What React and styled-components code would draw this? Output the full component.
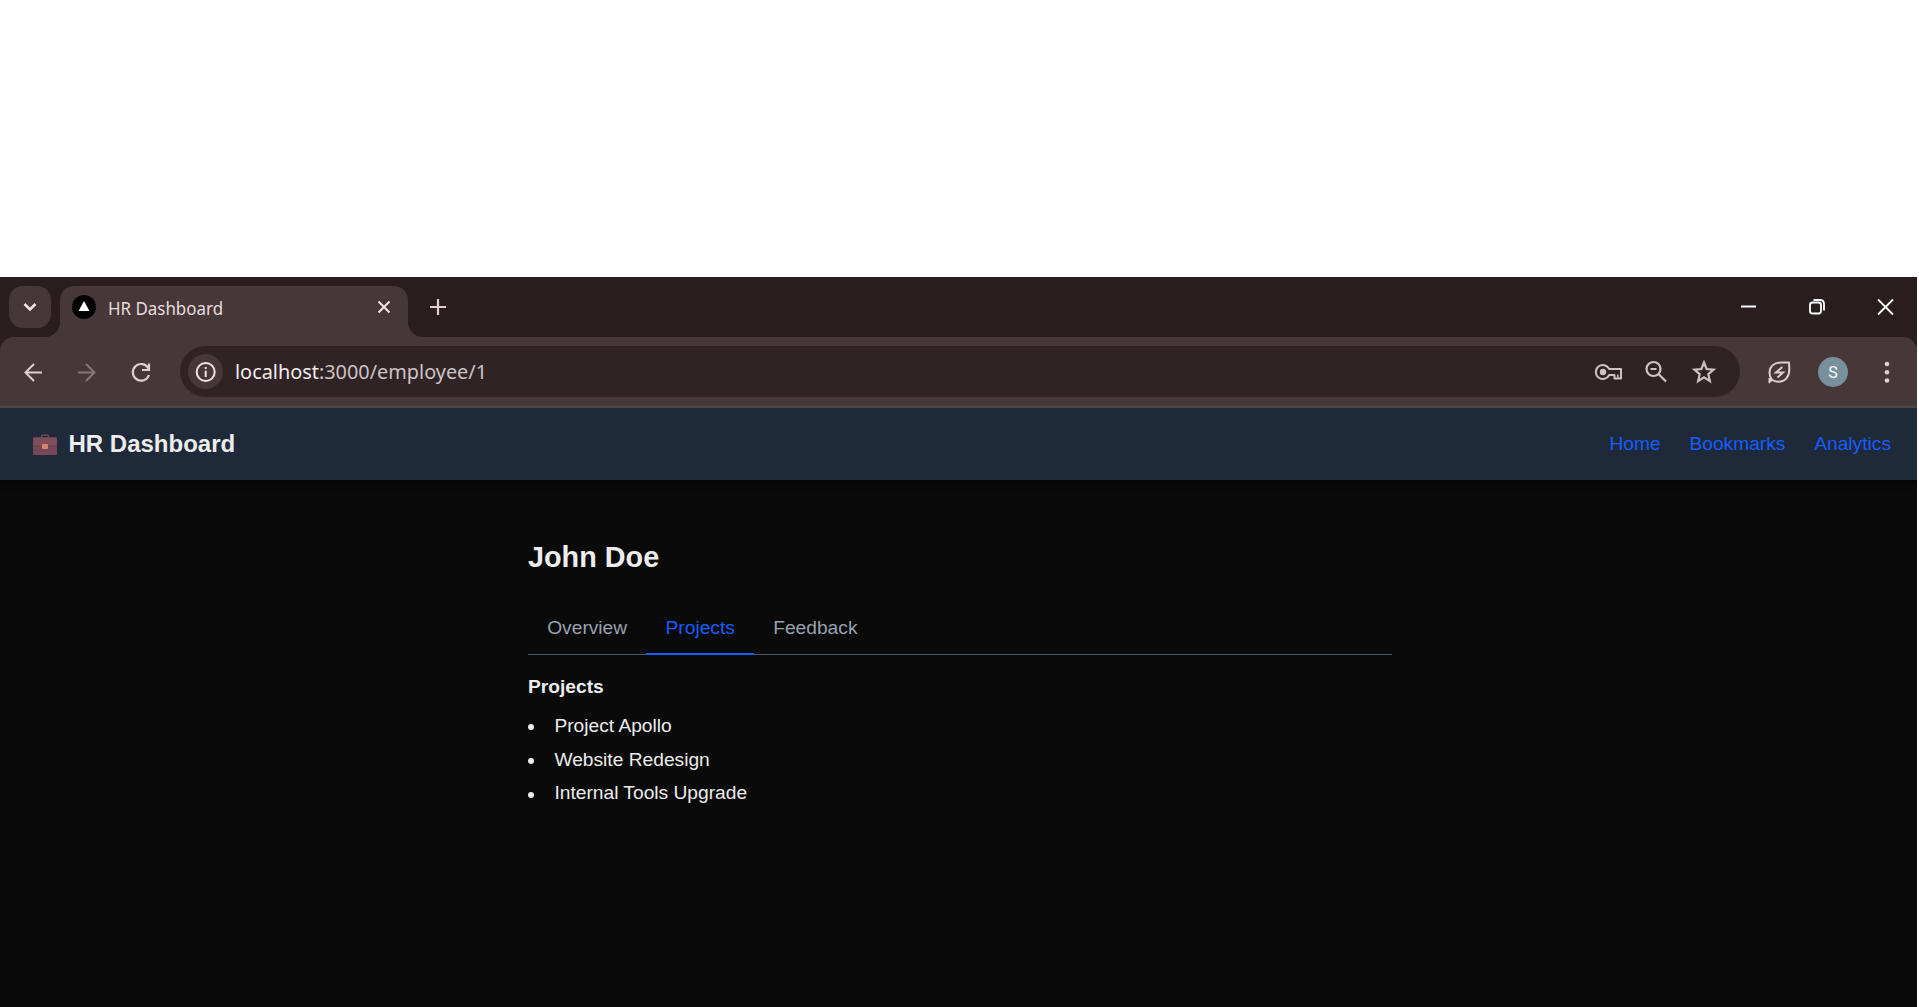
import React from "react";
import styled, { createGlobalStyle } from "styled-components";

const Global = createGlobalStyle`
  * { box-sizing: border-box; }
  body { margin: 0; background: #fff; }
  h1, h2, ul { margin: 0; padding: 0; }
`;
const ui = `"Noto Sans", "Open Sans", sans-serif`;
const Page = styled.div`
  width: 1919px; height: 1007px; padding: 277px 2px 0 0; overflow: hidden; background: #fff;
  display: flex; flex-direction: column; font-family: "Liberation Sans", Arial, sans-serif;
`;
const TabStrip = styled.div`
  height: 60px; flex: none; background: #291d1f; display: flex; align-items: flex-start; padding: 9px 0 0 9px;
`;
const TabSearch = styled.button`
  width: 42px; height: 42px; border: 0; border-radius: 14px; background: #463739; padding: 0;
  display: grid; place-items: center;
`;
const BrowserTab = styled.div`
  position: relative; width: 348px; height: 51px; margin-left: 9px; padding: 0 13px 9px 12px;
  border-radius: 14px 14px 0 0; background: #463739; display: flex; align-items: center;
  &::before, &::after { content: ""; position: absolute; bottom: 0; width: 15px; height: 15px; }
  &::before { left: -15px; background: radial-gradient(circle at 0 0, transparent 14.5px, #463739 15.5px); }
  &::after { right: -15px; background: radial-gradient(circle at 100% 0, transparent 14.5px, #463739 15.5px); }
`;
const TabTitle = styled.span`
  font: 18px/24px ${ui}; color: #e8dcdd; margin: 1px 0 0 12px; flex: 1; white-space: nowrap;
  & > span { display: inline-block; transform-origin: left; transform: scaleX(${p => p.$fit}); }
`;
const WindowButtons = styled.div`
  margin-left: auto; display: flex; align-items: center; height: 42px; gap: 49.5px; padding-right: 22px;
`;
const ToolbarWrap = styled.div` background: #291d1f; flex: none; `;
const Toolbar = styled.div`
  height: 71px; background: #463739; border-radius: 14px 14px 0 0; border-bottom: 2px solid #4b4544;
  display: flex; align-items: center; padding: 0 19px 0 20px;
`;
const NavIcons = styled.div` display: flex; gap: 28px; width: 160px; `;
const Omnibox = styled.div`
  width: 1560px; height: 51px; border-radius: 26px; background: #302325; display: flex; align-items: center;
  padding: 0 23px 0 8px;
`;
const InfoBadge = styled.span`
  width: 35px; height: 35px; border-radius: 50%; background: #463739; display: grid; place-items: center;
`;
const Url = styled.span`
  font: 20px/28px ${ui}; color: #cdc3c4; margin: 1px 0 0 12px; flex: 1; white-space: nowrap;
  & > span { display: inline-block; transform-origin: left; transform: scaleX(${p => p.$fit}); }
  b { font-weight: 400; color: #f4eced; }
`;
const OmniActions = styled.div`
  display: flex; align-items: center; gap: 20px;
  & > :last-child { margin-left: 3px; }
`;
const ToolActions = styled.div`
  display: flex; align-items: center; margin-left: auto; gap: 26px;
  & > :last-child { margin-left: 2px; }
`;
const Avatar = styled.span`
  width: 30px; height: 30px; border-radius: 50%; background: #78909c; color: #fff;
  font: 16px/31px Roboto, sans-serif; text-align: center;
`;
const SiteHeader = styled.header`
  height: 72px; flex: none; background: #1e2939; display: flex; align-items: center; justify-content: space-between;
  padding: 0 26px 0 33px; box-shadow: 0 3px 7px rgba(0, 0, 0, .5); clip-path: inset(0 0 -16px 0); z-index: 1;
`;
const Brand = styled.h1`
  font-size: 24px; line-height: 32px; font-weight: 700; color: #ededed; display: flex; align-items: center; gap: 11.5px;
`;
const SiteNav = styled.nav` display: flex; gap: 28.8px; `;
const NavLink = styled.a` color: #155dfc; font-size: 19.2px; line-height: 28px; `;
const Main = styled.main` flex: 1; background: #0a0a0a; color: #ededed; padding: 58px 0 0 528px; `;
const Profile = styled.section` width: 864px; `;
const Name = styled.h1` font-size: 28.8px; line-height: 38px; `;
const Tabs = styled.div` display: flex; margin-top: 29px; height: 50px; border-bottom: 1px solid #4a5565; `;
const Tab = styled.button`
  height: 50px; border: 0; background: none; padding: 0 19.2px 2px; font: 19.2px/28px "Liberation Sans", Arial, sans-serif;
  color: ${p => p.$active ? "#155dfc" : "#99a1af"};
  border-bottom: 2px solid ${p => p.$active ? "#155dfc" : "transparent"};
`;
const SectionTitle = styled.h2` font-size: 19.2px; line-height: 28px; margin-top: 18px; `;
const List = styled.ul` list-style: none; margin-top: 11px; display: flex; flex-direction: column; gap: 4.8px; `;
const Item = styled.li`
  font-size: 19.2px; line-height: 28.8px; display: flex; align-items: center;
  &::before { content: ""; width: 6px; height: 6px; border-radius: 50%; background: #ededed; margin: 2px 20.4px 0 0; }
`;
const Svg = styled.svg` display: block; flex: none; fill: none; stroke: ${p => p.$c || "#e0cfd1"}; stroke-width: ${p => p.$w || 2}; `;

const Icon = ({ w, h = w, c, s, children }) => (
  <Svg width={w} height={h} viewBox={`0 0 ${w} ${h}`} $c={c} $w={s}>{children}</Svg>
);

const Briefcase = () => (
  <svg width="24" height="22" viewBox="0 0 24 22">
    <path d="M8.5 4.5V3.7Q8.5 2 10.2 2H13.8Q15.5 2 15.5 3.7V4.5" fill="none" stroke="#714a4d" strokeWidth="1.5" />
    <rect y="4.500" width="24" height="17.500" rx="1" fill="#74485a" />
    <path d="M0 5.500Q0 4.500 1 4.500H23Q24 4.500 24 5.500V11.500Q23.500 13 22 13H2Q.5 13 0 11.500Z" fill="#7e4e59" />
    <path d="M.5 13H23.5" stroke="#66404e" strokeWidth=".8" />
    <rect x="9" y="11" width="6" height="5" rx="1" fill="#d58468" />
  </svg>
);

export default function App() {
  return (
    <Page>
      <Global />
      <TabStrip>
        <TabSearch aria-label="Search tabs"><Icon w={14} h={10} s={2.5} c="#f0e4e5"><path d="m1.5 2 5.5 5.5L12.5 2" /></Icon></TabSearch>
        <BrowserTab>
          <Icon w={24}><circle cx="12" cy="12" r="12" fill="#000" stroke="none" /><path d="M12 6 17.5 16H6.5Z" fill="#fff" stroke="none" /></Icon>
          <TabTitle $fit={0.94}><span>HR Dashboard</span></TabTitle>
          <Icon w={22} c="#f0e4e5"><path d="m5.5 5.5 11 11m0-11-11 11" /></Icon>
        </BrowserTab>
        <Icon w={64} h={42} s={2.2}><path d="M30 13v16M22 21h16" /></Icon>
        <WindowButtons>
          <Icon w={19} c="#fff"><path d="M2 8.5h15" /></Icon>
          <Icon w={19} c="#fff" s={1.8}><rect x="2" y="4.500" width="11" height="11" rx="2.500" /><path d="M5.500 2h6.500q4 0 4 4v6.500" /></Icon>
          <Icon w={19} c="#fff" s={1.8}><path d="m2 1.500 15 15m0-15-15 15" /></Icon>
        </WindowButtons>
      </TabStrip>
      <ToolbarWrap>
        <Toolbar>
          <NavIcons>
            <Icon w={26}><path d="M22 13.5H5.5m8.500-8.500L5.500 13.500l8.500 8.500" /></Icon>
            <Icon w={26} c="#857678"><path d="M4 13.500h16.500M12 5l8.500 8.500-8.500 8.500" /></Icon>
            <Icon w={26} s={2.2}><path d="M20.500 9.500A8.300 8.300 0 1 0 21 16M21 4.500v6.500h-7" /></Icon>
          </NavIcons>
          <Omnibox>
            <InfoBadge><Icon w={22} c="#f0e4e5"><circle cx="10.700" cy="11" r="9" /><path d="M10.700 9.800V16M10.700 6v2" /></Icon></InfoBadge>
            <Url $fit={0.993}><span><b>localhost</b>:3000/employee/1</span></Url>
            <OmniActions>
              <Icon w={30} h={24} c="#cdc3c4"><path d="M15.200 9A7 7 0 1 0 15.200 15H20.500V18.500H27V9Z" strokeLinejoin="round" /><circle cx="9" cy="12" r="3.200" fill="#cdc3c4" stroke="none" /><path d="M23.800 14.500V18" strokeWidth="1.500" /></Icon>
              <Icon w={24} c="#cdc3c4" s={2.2}><circle cx="9.500" cy="9" r="7" /><path d="m14.500 14 7.500 7.500M6.500 9h6" /></Icon>
              <Icon w={26} c="#cdc3c4" s={2.2}><path d="m13 3.500 2.600 6.500 7 .6-5.300 4.600 1.600 6.900-5.900-3.700-5.900 3.700 1.600-6.900L3.400 10.600l7-.6Z" /></Icon>
            </OmniActions>
          </Omnibox>
          <ToolActions>
            <Icon w={26}><path d="M23 3.500H16C8 3.500 3.500 7.500 3.500 13.800 3.500 19.300 7 22.800 12.300 22.800 19.500 22.800 23.500 17.500 23.300 10ZM2.800 23.800 6.500 20M3.500 19v3.500" strokeLinejoin="round" /><path d="M16.300 8 10 13.500H17L11.500 18.500" strokeWidth="2" /></Icon>
            <Avatar>S</Avatar>
            <Icon w={22} h={26}><g fill="#e0cfd1" stroke="none"><circle cx="11" cy="5" r="2.300" /><circle cx="11" cy="13.300" r="2.300" /><circle cx="11" cy="21.500" r="2.300" /></g></Icon>
          </ToolActions>
        </Toolbar>
      </ToolbarWrap>
      <SiteHeader>
        <Brand><Briefcase />HR Dashboard</Brand>
        <SiteNav><NavLink>Home</NavLink><NavLink>Bookmarks</NavLink><NavLink>Analytics</NavLink></SiteNav>
      </SiteHeader>
      <Main>
        <Profile>
          <Name>John Doe</Name>
          <Tabs><Tab>Overview</Tab><Tab $active>Projects</Tab><Tab>Feedback</Tab></Tabs>
          <SectionTitle>Projects</SectionTitle>
          <List><Item>Project Apollo</Item><Item>Website Redesign</Item><Item>Internal Tools Upgrade</Item></List>
        </Profile>
      </Main>
    </Page>
  );
}
